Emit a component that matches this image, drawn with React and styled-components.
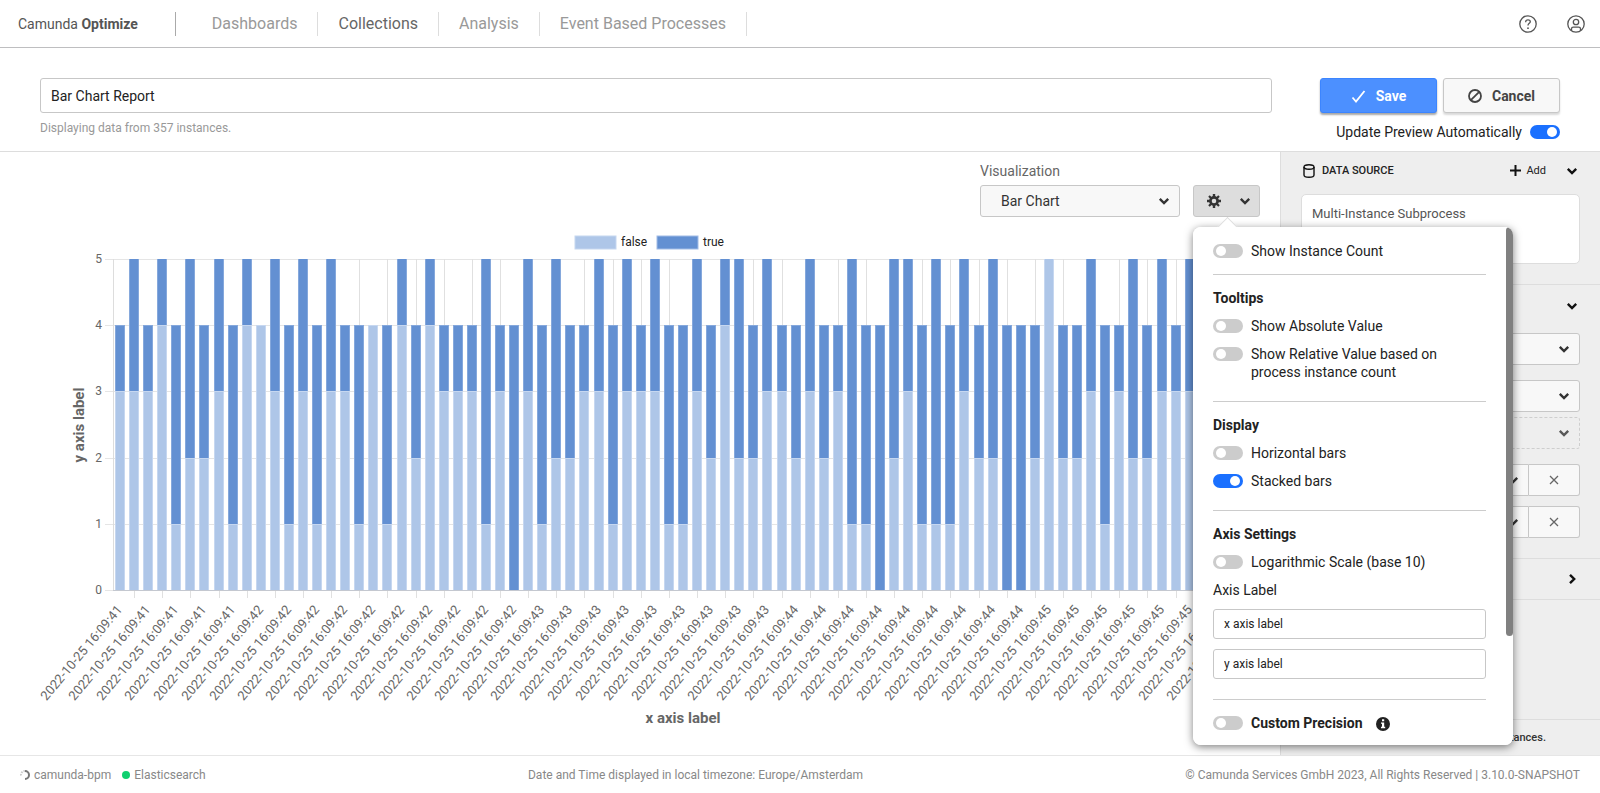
import React, { useState } from 'react';
import styled, { createGlobalStyle, css } from 'styled-components';

const GlobalStyle = createGlobalStyle`
  * {
    box-sizing: border-box;
  }

  body {
    margin: 0;
    background: #fff;
    color: #222;
    font-family: Roboto, 'Noto Sans', sans-serif;
    font-size: 14px;
    line-height: 18px;
  }

  button,
  input,
  select {
    font: inherit;
    color: inherit;
  }
`;

const Page = styled.div`
  display: flex;
  flex-direction: column;
  min-height: 100vh;
`;

const Header = styled.header`
  display: flex;
  align-items: center;
  height: 48px;
  padding: 0 16px 0 18px;
  border-bottom: 1px solid #bebec0;
`;

const Logo = styled.a`
  padding-right: 37px;
  border-right: 1px solid #aaa;
  color: #555;
  font-size: 14px;
  line-height: 24px;
  text-decoration: none;
`;

const Nav = styled.nav`
  display: flex;
  flex-grow: 1;
  padding-left: 16px;
`;

const NavItem = styled.a`
  padding: 0 20px;
  border-right: 1px solid #ddd;
  color: ${({ $active }) => ($active ? '#666' : '#999')};
  font-size: 16px;
  line-height: 24px;
  text-decoration: none;
`;

const IconButton = styled.button`
  display: flex;
  justify-content: center;
  align-items: center;
  width: 16px;
  height: 24px;
  padding: 0;
  border: none;
  background: transparent;
  cursor: pointer;
  color: ${({ $color }) => $color || '#111'};

  svg {
    flex-shrink: 0;
  }
`;

const HeaderActions = styled.div`
  display: flex;
  gap: 32px;
`;

const ReportHead = styled.section`
  display: flex;
  gap: 48px;
  height: 104px;
  padding: 30px 40px 0;
  border-bottom: 1px solid #ddd;
`;

const NameColumn = styled.div`
  flex-grow: 1;
`;

const TextInput = styled.input`
  display: block;
  width: 100%;
  height: ${({ $large }) => ($large ? '35px' : '30px')};
  padding: 0 10px;
  border: 1px solid #c7c7c7;
  border-radius: 3px;
  background: #fff;
  font-size: ${({ $large }) => ($large ? '14px' : '12px')};
`;

const InstanceCount = styled.div`
  margin-top: 6px;
  color: #999;
  font-size: 12px;
`;

const ActionColumn = styled.div`
  display: flex;
  flex-direction: column;
  align-items: flex-end;
  gap: 10px;
`;

const ButtonRow = styled.div`
  display: flex;
  gap: 6px;
`;

const Button = styled.button`
  display: flex;
  justify-content: center;
  align-items: center;
  gap: 10px;
  width: 117px;
  height: 35px;
  border: 1px solid #c7c7c7;
  border-radius: 3px;
  background: #f8f8f8;
  box-shadow: 0 2px 2px rgba(0, 0, 0, 0.15);
  color: #444;
  font-weight: 700;
  cursor: pointer;

  ${({ $primary }) =>
    $primary &&
    css`
      border-color: #3c85ff;
      background: #4c90ff;
      box-shadow: 0 2px 2px rgba(0, 0, 0, 0.35);
      color: #fff;
    `}
`;

const SwitchLabel = styled.label`
  display: flex;
  gap: 8px;
  flex-direction: ${({ $reverse }) => ($reverse ? 'row-reverse' : 'row')};
  font-weight: ${({ $bold }) => ($bold ? 700 : 400)};
  cursor: pointer;
`;

const SwitchInput = styled.input`
  appearance: none;
  flex-shrink: 0;
  width: 30px;
  height: 14px;
  margin: 2px 0;
  padding: 2px;
  border-radius: 7px;
  background: #ccc;
  cursor: pointer;

  &::before {
    content: '';
    display: block;
    width: 10px;
    height: 10px;
    margin-left: 1px;
    border-radius: 50%;
    background: #fff;
  }

  &:checked {
    background: #1a70ff;
  }

  &:checked::before {
    margin-left: 15px;
  }
`;

const Main = styled.main`
  display: flex;
  flex-grow: 1;
`;

const ChartPane = styled.section`
  flex: 1 1 0;
  min-width: 0;
`;

const VisualizationBar = styled.div`
  display: flex;
  justify-content: flex-end;
  align-items: flex-end;
  gap: 13px;
  padding: 10px 20px 0;
`;

const Field = styled.div`
  display: flex;
  flex-direction: column;
  gap: 5px;
  width: 200px;
  color: #666;
`;

const SelectBox = styled.div`
  display: flex;
  align-items: center;
  position: relative;
  flex-grow: 1;
  height: 32px;
  color: #333;
  opacity: ${({ $dashed }) => ($dashed ? 0.8 : 1)};

  svg {
    position: absolute;
    right: 10px;
    pointer-events: none;
  }
`;

const Select = styled.select`
  appearance: none;
  width: 100%;
  height: 32px;
  padding: 0 30px 0 20px;
  border: 1px ${({ $dashed }) => ($dashed ? 'dashed' : 'solid')} #c7c7c7;
  border-radius: ${({ $joined }) => ($joined ? '3px 0 0 3px' : '3px')};
  background: ${({ $dashed }) => ($dashed ? 'transparent' : '#f8f8f8')};
`;

const SettingsAnchor = styled.div`
  position: relative;
`;

const SettingsButton = styled.button`
  display: flex;
  justify-content: space-between;
  align-items: center;
  width: 67px;
  height: 32px;
  padding: 0 8px 0 13px;
  border: 1px solid #c7c7c7;
  border-radius: 3px;
  background: #ddd;
  color: #333;
  cursor: pointer;
`;

const Popover = styled.div`
  position: absolute;
  z-index: 2;
  top: 42px;
  left: 0;
  width: 320px;
  height: calc(100vh - 275px);
  border-radius: 8px;
  background: #fff;
  box-shadow: 0 2px 8px rgba(0, 0, 0, 0.5);

  &::before {
    content: '';
    position: absolute;
    top: -7px;
    left: 27px;
    width: 14px;
    height: 14px;
    border: 1px solid #ddd;
    border-width: 1px 0 0 1px;
    background: #fff;
    transform: rotate(45deg);
  }
`;

const PopoverContent = styled.div`
  position: relative;
  height: 100%;
  padding: 15px 27px 0 20px;
  overflow: hidden;
  border-radius: 8px;
  background: #fff;
`;

const ScrollThumb = styled.div`
  position: absolute;
  top: 0;
  right: 0;
  width: 7px;
  height: 79%;
  border-radius: 4px;
  background: #808080;
`;

const Group = styled.fieldset`
  display: flex;
  flex-direction: column;
  gap: 10px;
  margin: 0;
  padding: 0 0 ${({ $compact }) => ($compact ? '14px' : '20px')};
  border: none;

  & + & {
    padding-top: 14px;
    border-top: 1px solid #ccc;
  }
`;

const GroupTitle = styled.div`
  font-weight: 700;
`;

const SwitchWithHint = styled.div`
  display: flex;
  gap: 14px;
`;

const Sidebar = styled.aside`
  display: flex;
  flex-direction: column;
  width: 320px;
  border-left: 1px solid #ddd;
  background: #eee;
`;

const SidebarSection = styled.section`
  padding: 0 20px ${({ $closed }) => ($closed ? '0' : '20px')};
  border-bottom: 1px solid #ddd;
`;

const SectionHead = styled.div`
  display: flex;
  align-items: center;
  height: ${({ $height }) => $height || 40}px;
  font-size: 11px;
`;

const SectionTitle = styled.h3`
  flex-grow: 1;
  margin: 0 0 0 5px;
  font-size: 11px;
  font-weight: 500;
`;

const AddButton = styled.button`
  display: flex;
  align-items: center;
  gap: 5px;
  margin-right: 18px;
  padding: 0;
  border: none;
  background: transparent;
  cursor: pointer;
`;

const SourceCard = styled.div`
  height: 70px;
  margin-top: 5px;
  padding: 10px;
  border: 1px solid #ddd;
  border-radius: 5px;
  background: #fff;
  color: #555;
  font-size: 13px;
`;

const ControlList = styled.div`
  display: flex;
  flex-direction: column;
  gap: 15px;
  padding-top: 6px;
`;

const MeasureList = styled.div`
  display: flex;
  flex-direction: column;
  gap: 5px;
`;

const GroupingList = styled.div`
  display: flex;
  flex-direction: column;
  gap: 10px;
`;

const ControlRow = styled.div`
  display: flex;
`;

const RemoveButton = styled.button`
  display: flex;
  justify-content: center;
  align-items: center;
  width: 51px;
  height: 32px;
  border: 1px solid #c7c7c7;
  border-left: none;
  border-radius: 0 3px 3px 0;
  background: #f8f8f8;
  color: #666;
  cursor: pointer;
`;

const SidebarFoot = styled.div`
  margin-top: auto;
  border-top: 1px solid #ddd;
  color: #333;
  font-size: 11px;
  font-weight: 500;
  line-height: 35px;
  text-align: center;
`;

const Footer = styled.footer`
  display: flex;
  justify-content: space-between;
  align-items: center;
  height: 38px;
  padding: 0 20px;
  border-top: 1px solid #e6e6e6;
  color: #888;
  font-size: 12px;
`;

const StatusList = styled.div`
  display: flex;
  align-items: center;
  gap: 4px;
`;

const StatusDot = styled.span`
  width: 8px;
  height: 8px;
  margin-left: 7px;
  border-radius: 50%;
  background: #10d070;
`;

const ChartSvg = styled.svg`
  display: block;
  width: 100%;
  height: auto;

  text {
    fill: #666;
    font-size: 12px;
  }

  .date {
    font-size: 13px;
  }

  .legend {
    fill: #222;
  }

  .title {
    font-size: 15px;
    font-weight: 700;
  }
`;

// [false, total] for each evaluated point in time
const bars = (
  '34 35 34 45 14 25 24 35 14 45 44 35 14 35 14 35 34 14 44 14 45 24 45 34 34 34 15 34 04 35 14 25 24 34 35 14 35 ' +
  '34 35 14 14 35 24 45 25 24 35 34 24 35 24 34 15 14 04 25 35 14 15 14 35 24 25 04 04 24 55 24 24 35 14 34 25 24 ' +
  '35 34 35 34 24 35 34'
)
  .split(' ')
  .map((pair) => pair.split('').map(Number));

const LEFT = 113;
const RIGHT = 1253;
const TOP = 42;
const BOTTOM = 373;
const STEP = (RIGHT - LEFT) / bars.length;

const yOf = (value) => Math.round(BOTTOM - (value * (BOTTOM - TOP)) / 5);
const centerOf = (index) => Math.round(LEFT + STEP * (index + 0.5));

const secondOf = (tick) => {
  if (tick < 5) return 41;
  if (tick < 15) return 42;
  if (tick < 24) return 43;
  return tick < 33 ? 44 : 45;
};

function Bar({ x, from, to, fill, edge }) {
  const y = yOf(to);
  const height = yOf(from) - y;
  if (!height) return null;
  return (
    <>
      <rect x={x - 5} y={y} width="10" height={height} fill={edge} />
      <rect x={x - 4} y={to === 5 ? y : y + 1} width="8" height={to === 5 ? height : height - 1} fill={fill} />
    </>
  );
}

function BarChart() {
  return (
    <ChartSvg viewBox="0 0 1280 520" role="img" aria-label="Bar chart">
      <rect x="575" y="19" width="41" height="13" fill="#aec6e8" stroke="#c6d7f0" />
      <text className="legend" x="621" y="29">false</text>
      <rect x="657" y="19" width="41" height="13" fill="#6390d2" stroke="#a2bce6" />
      <text className="legend" x="703" y="29">true</text>

      {[0, 1, 2, 3, 4, 5].map((value) => (
        <g key={value}>
          <rect x="105" y={yOf(value)} width={RIGHT - 105} height="1" fill="#e5e5e5" />
          <text x="102" y={yOf(value) + 4} textAnchor="end">{value}</text>
        </g>
      ))}
      <rect x={LEFT} y={TOP} width="1" height={BOTTOM - TOP} fill="#ddd" />
      {bars.map((_, index) =>
        index % 2 ? (
          <rect key={index} x={centerOf(index)} y={TOP} width="1" height={BOTTOM - TOP + 8} fill="#e0e0e0" />
        ) : null
      )}

      {bars.map(([low, total], index) => (
        <g key={index}>
          <Bar x={centerOf(index)} from={low} to={total} fill="#6390d2" edge="#85a8dc" />
          <Bar x={centerOf(index)} from={0} to={low} fill="#aec6e8" edge="#c6d7f0" />
        </g>
      ))}
      <rect x={LEFT} y={BOTTOM} width={RIGHT - LEFT} height="1" fill="#c4c8d0" />

      {bars.map((_, index) =>
        index % 2 ? null : (
          <text
            key={index}
            className="date"
            textAnchor="end"
            transform={`translate(${centerOf(index) + 3} 393) rotate(-50)`}
          >
            2022-10-25 16:09:{secondOf(index / 2)}
          </text>
        )
      )}
      <text className="title" x="683" y="506" textAnchor="middle">x axis label</text>
      <text className="title" textAnchor="middle" transform="translate(84 208) rotate(-90)">y axis label</text>
    </ChartSvg>
  );
}

function Chevron({ right }) {
  return (
    <svg width="12" height="12" viewBox="0 0 12 12" fill="none" stroke="currentColor" strokeWidth="2.4">
      <path d={right ? 'M4 1.8 8.2 6 4 10.2' : 'M1.8 3.8 6 8 10.2 3.8'} />
    </svg>
  );
}

function Gear() {
  return (
    <svg width="14" height="14" viewBox="0 0 14 14" fill="none" stroke="currentColor">
      <circle cx="7" cy="7" r="3.6" strokeWidth="2.6" />
      <path d="M7 0v3M7 11v3M0 7h3M11 7h3" strokeWidth="2.4" />
      <path d="M2 2l2.2 2.2M9.800 9.800 12 12M12 2 9.800 4.200M4.200 9.800 2 12" strokeWidth="2.200" />
    </svg>
  );
}

function Cross() {
  return (
    <svg width="10" height="10" viewBox="0 0 10 10" stroke="currentColor" strokeWidth="1.3">
      <path d="M1 1l8 8M9 1 1 9" />
    </svg>
  );
}

function Dropdown({ value, label, dashed, joined }) {
  return (
    <SelectBox $dashed={dashed}>
      <Select aria-label={label} $dashed={dashed} $joined={joined}>
        <option>{value}</option>
      </Select>
      <Chevron />
    </SelectBox>
  );
}

function Switch({ label, bold, reverse, on = false }) {
  const [checked, setChecked] = useState(on);
  return (
    <SwitchLabel $bold={bold} $reverse={reverse}>
      <SwitchInput type="checkbox" role="switch" checked={checked} onChange={() => setChecked(!checked)} />
      <span>{label}</span>
    </SwitchLabel>
  );
}

function Settings() {
  return (
    <Popover>
      <PopoverContent>
        <Group $compact>
          <Switch label="Show Instance Count" />
        </Group>
        <Group>
          <GroupTitle>Tooltips</GroupTitle>
          <Switch label="Show Absolute Value" />
          <Switch label={<>Show Relative Value based on<br />process instance count</>} />
        </Group>
        <Group>
          <GroupTitle>Display</GroupTitle>
          <Switch label="Horizontal bars" />
          <Switch label="Stacked bars" on />
        </Group>
        <Group>
          <GroupTitle>Axis Settings</GroupTitle>
          <Switch label="Logarithmic Scale (base 10)" />
          <span>Axis Label</span>
          <TextInput aria-label="x axis label" defaultValue="x axis label" />
          <TextInput aria-label="y axis label" defaultValue="y axis label" />
        </Group>
        <Group>
          <SwitchWithHint>
            <Switch label="Custom Precision" bold />
            <svg width="14" height="18" viewBox="0 0 14 18">
              <circle cx="7" cy="10" r="7" fill="#222" />
              <path d="M6 5.2h2.2v2H6zM5 8.4h3.2v4.4h1v1.4H5v-1.4h1V9.8H5z" fill="#fff" />
            </svg>
          </SwitchWithHint>
        </Group>
        <ScrollThumb />
      </PopoverContent>
    </Popover>
  );
}

export default function App() {
  return (
    <Page>
      <GlobalStyle />
      <Header>
        <Logo href="#">
          Camunda <b>Optimize</b>
        </Logo>
        <Nav>
          <NavItem href="#">Dashboards</NavItem>
          <NavItem href="#" $active>Collections</NavItem>
          <NavItem href="#">Analysis</NavItem>
          <NavItem href="#">Event Based Processes</NavItem>
        </Nav>
        <HeaderActions>
          <IconButton aria-label="Help" $color="#555">
            <svg width="18" height="18" viewBox="0 0 18 18" fill="none" stroke="currentColor" strokeWidth="1.3">
              <circle cx="9" cy="9" r="8.2" />
              <path d="M6.7 7.2V6.8c0-1.300 1-2 2.300-2s2.300.7 2.300 2c0 1.500-2.300 1.700-2.300 3.700" />
              <circle cx="9" cy="13.200" r=".9" fill="currentColor" stroke="none" />
            </svg>
          </IconButton>
          <IconButton aria-label="User" $color="#555">
            <svg width="18" height="18" viewBox="0 0 18 18" fill="none" stroke="currentColor" strokeWidth="1.3">
              <circle cx="9" cy="9" r="8.2" />
              <circle cx="9" cy="7" r="2.7" />
              <path d="M4.500 15.500v-1.500c0-1 .8-1.800 1.800-1.800h5.400c1 0 1.800.8 1.800 1.800v1.500" />
            </svg>
          </IconButton>
        </HeaderActions>
      </Header>

      <ReportHead>
        <NameColumn>
          <TextInput $large aria-label="Report name" defaultValue="Bar Chart Report" />
          <InstanceCount>Displaying data from 357 instances.</InstanceCount>
        </NameColumn>
        <ActionColumn>
          <ButtonRow>
            <Button $primary>
              <svg width="15" height="14" viewBox="0 0 15 14" fill="none" stroke="currentColor" strokeWidth="1.8">
                <path d="M1.500 8.500 5 12.500 13.500 2" />
              </svg>
              Save
            </Button>
            <Button>
              <svg width="14" height="14" viewBox="0 0 14 14" fill="none" stroke="currentColor" strokeWidth="1.8">
                <circle cx="7" cy="7" r="6" />
                <path d="M2.800 11.200 11.200 2.800" />
              </svg>
              Cancel
            </Button>
          </ButtonRow>
          <Switch reverse on label="Update Preview Automatically" />
        </ActionColumn>
      </ReportHead>

      <Main>
        <ChartPane>
          <VisualizationBar>
            <Field>
              <span>Visualization</span>
              <Dropdown value="Bar Chart" label="Visualization" />
            </Field>
            <SettingsAnchor>
              <SettingsButton aria-label="Visualization settings">
                <Gear />
                <Chevron />
              </SettingsButton>
              <Settings />
            </SettingsAnchor>
          </VisualizationBar>
          <BarChart />
        </ChartPane>

        <Sidebar>
          <SidebarSection>
            <SectionHead $height={37}>
              <svg width="16" height="16" viewBox="0 0 16 16" fill="none" stroke="#111" strokeWidth="1.4">
                <ellipse cx="8" cy="4" rx="5" ry="2.2" />
                <path d="M3 4v8c0 1.300 2.200 2.300 5 2.300s5-1 5-2.300V4" />
              </svg>
              <SectionTitle>DATA SOURCE</SectionTitle>
              <AddButton>
                <svg width="11" height="11" viewBox="0 0 11 11" stroke="#111" strokeWidth="2">
                  <path d="M5.500 0v11M0 5.500h11" />
                </svg>
                Add
              </AddButton>
              <IconButton aria-label="Collapse data source">
                <Chevron />
              </IconButton>
            </SectionHead>
            <SourceCard>Multi-Instance Subprocess</SourceCard>
          </SidebarSection>
          <SidebarSection>
            <SectionHead $height={42}>
              <SectionTitle>REPORT SETUP</SectionTitle>
              <IconButton aria-label="Collapse report setup">
                <Chevron />
              </IconButton>
            </SectionHead>
            <ControlList>
              <Dropdown label="View" value="Process Instance" />
              <MeasureList>
                <Dropdown label="Measure" value="Count" />
                <Dropdown label="Add measure" value="Add measure" dashed />
              </MeasureList>
              <GroupingList>
                <ControlRow>
                  <Dropdown label="Group by" value="Start Date" joined />
                  <RemoveButton aria-label="Remove grouping">
                    <Cross />
                  </RemoveButton>
                </ControlRow>
                <ControlRow>
                  <Dropdown label="Distributed by" value="Variable" joined />
                  <RemoveButton aria-label="Remove distribution">
                    <Cross />
                  </RemoveButton>
                </ControlRow>
              </GroupingList>
            </ControlList>
          </SidebarSection>
          <SidebarSection $closed>
            <SectionHead>
              <SectionTitle>FILTERS</SectionTitle>
              <IconButton aria-label="Expand filters">
                <Chevron right />
              </IconButton>
            </SectionHead>
          </SidebarSection>
          <SidebarFoot>Displaying data from 357 of 357 instances.</SidebarFoot>
        </Sidebar>
      </Main>

      <Footer>
        <StatusList>
          <svg width="10" height="10" viewBox="0 0 10 10" fill="none" strokeWidth="2">
            <path d="M1 5.500A4 4 0 0 1 5 1" stroke="#ccc" strokeDasharray="1.5 1" />
            <path d="M5 1a4 4 0 0 1 4 4 4 4 0 0 1-4 4" stroke="#777" />
          </svg>
          camunda-bpm
          <StatusDot />
          Elasticsearch
        </StatusList>
        <div>Date and Time displayed in local timezone: Europe/Amsterdam</div>
        <div>© Camunda Services GmbH 2023, All Rights Reserved | 3.10.0-SNAPSHOT</div>
      </Footer>
    </Page>
  );
}
